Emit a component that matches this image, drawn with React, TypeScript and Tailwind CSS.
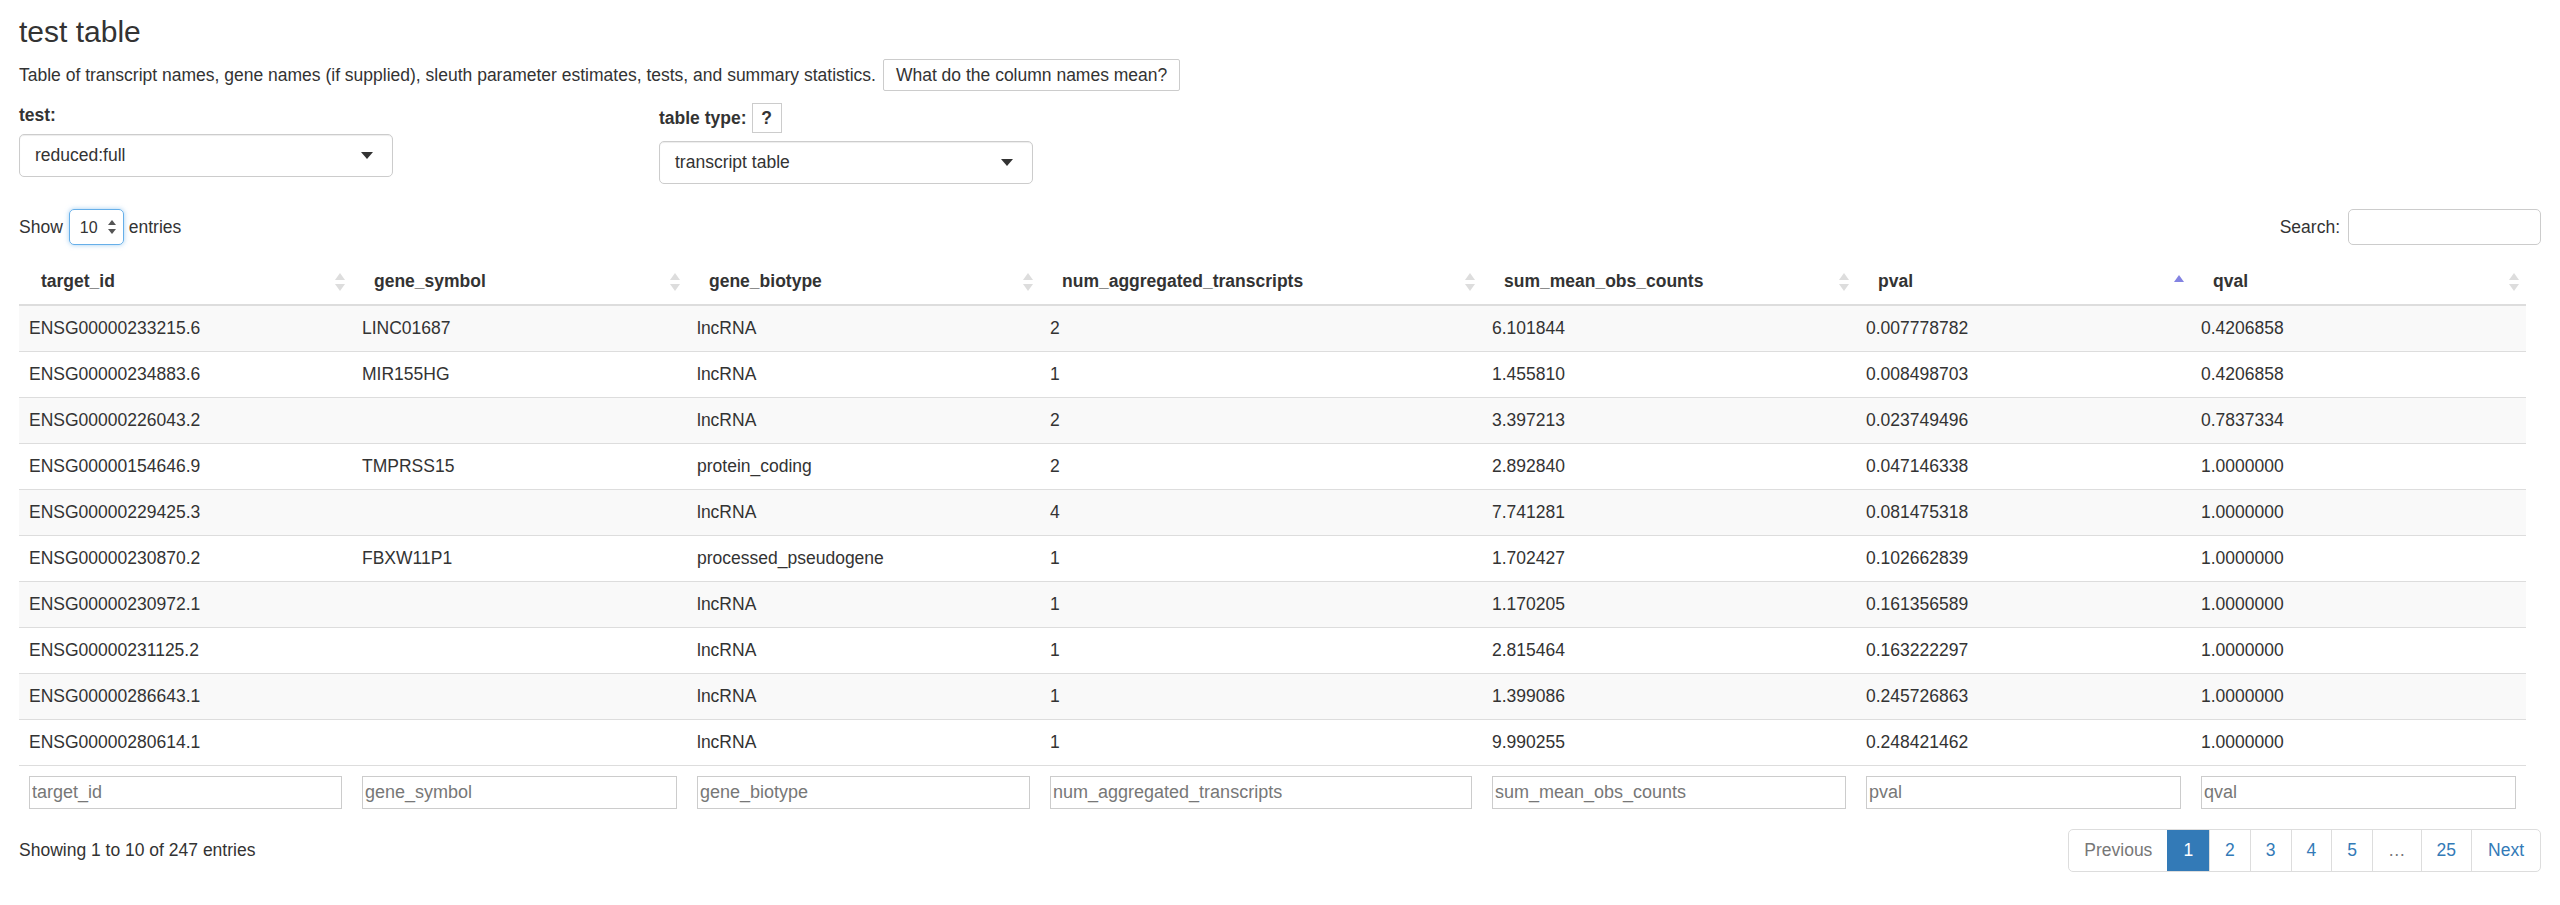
import React from "react";

const columns = [
  { name: "target_id", width: 333 },
  { name: "gene_symbol", width: 335 },
  { name: "gene_biotype", width: 353 },
  { name: "num_aggregated_transcripts", width: 442 },
  { name: "sum_mean_obs_counts", width: 374 },
  { name: "pval", width: 335 },
  { name: "qval", width: 335 },
];

const rows: string[][] = [
  ["ENSG00000233215.6", "LINC01687", "lncRNA", "2", "6.101844", "0.007778782", "0.4206858"],
  ["ENSG00000234883.6", "MIR155HG", "lncRNA", "1", "1.455810", "0.008498703", "0.4206858"],
  ["ENSG00000226043.2", "", "lncRNA", "2", "3.397213", "0.023749496", "0.7837334"],
  ["ENSG00000154646.9", "TMPRSS15", "protein_coding", "2", "2.892840", "0.047146338", "1.0000000"],
  ["ENSG00000229425.3", "", "lncRNA", "4", "7.741281", "0.081475318", "1.0000000"],
  ["ENSG00000230870.2", "FBXW11P1", "processed_pseudogene", "1", "1.702427", "0.102662839", "1.0000000"],
  ["ENSG00000230972.1", "", "lncRNA", "1", "1.170205", "0.161356589", "1.0000000"],
  ["ENSG00000231125.2", "", "lncRNA", "1", "2.815464", "0.163222297", "1.0000000"],
  ["ENSG00000286643.1", "", "lncRNA", "1", "1.399086", "0.245726863", "1.0000000"],
  ["ENSG00000280614.1", "", "lncRNA", "1", "9.990255", "0.248421462", "1.0000000"],
];

const pages = ["1", "2", "3", "4", "5", "…", "25"];

// gray double arrow, or the blue "asc" arrow on the sorted column
const SortIcon: React.FC<{ asc?: boolean }> = ({ asc }) => (
  <svg width="10" height="18" viewBox="0 0 10 18" className="shrink-0">
    {asc ? (
      <polygon points="5,2 10,9 0,9" fill="#8383e2" />
    ) : (
      <>
        <polygon points="5,0 10,7 0,7" fill="#dddddd" />
        <polygon points="0,11 10,11 5,18" fill="#dddddd" />
      </>
    )}
  </svg>
);

const Caret = () => (
  <svg width="12" height="7" viewBox="0 0 12 7">
    <polygon points="0,0 12,0 6,7" fill="#333333" />
  </svg>
);

const SelectBox: React.FC<{ value: string }> = ({ value }) => (
  <div className="w-[374px] h-[43px] border border-[#cccccc] rounded-[5px] bg-white flex items-center justify-between pl-[15px] pr-[19px] shadow-[inset_0_1px_1px_rgba(0,0,0,0.075)]">
    <span>{value}</span>
    <Caret />
  </div>
);

const App: React.FC = () => {
  return (
    <div className="px-[19px] pb-[20px] text-[17.5px] leading-[25px] text-[#333333] font-['Liberation_Sans',Arial,sans-serif]">
      <h3 className="pt-[15px] mb-[11px] text-[30px] leading-[33px] font-medium">test table</h3>

      <div className="flex items-center h-[32px]">
        <span>
          Table of transcript names, gene names (if supplied), sleuth parameter estimates, tests, and summary
          statistics.
        </span>
        <span className="ml-[7px] h-[32px] px-[12px] flex items-center border border-[#cccccc] rounded-[2px]">
          What do the column names mean?
        </span>
      </div>

      <div className="flex mt-[12px]">
        <div className="w-[640px]">
          <div className="h-[25px] mb-[6px] font-bold">test:</div>
          <SelectBox value="reduced:full" />
        </div>
        <div>
          <div className="flex items-center h-[30px] mb-[8px] font-bold">
            <span>table type:</span>
            <span className="ml-[5px] w-[30px] h-[30px] flex items-center justify-center border border-[#cccccc]">
              ?
            </span>
          </div>
          <SelectBox value="transcript table" />
        </div>
      </div>

      {/* datatable */}
      <div className="mt-[25px]">
        <div className="flex items-center justify-between h-[36px]">
          <div className="flex items-center">
            <span>Show</span>
            <div className="ml-[6px] mr-[5px] w-[55px] h-[36px] rounded-[5px] border border-[#66afe9] shadow-[0_0_5px_rgba(102,175,233,0.6)] flex items-center justify-between pl-[10px] pr-[7px]">
              <span className="text-[16px]">10</span>
              <svg width="8" height="14" viewBox="0 0 8 14">
                <polygon points="4,0 8,5 0,5" fill="#555555" />
                <polygon points="0,9 8,9 4,14" fill="#555555" />
              </svg>
            </div>
            <span>entries</span>
          </div>
          <div className="flex items-center">
            <span>Search:</span>
            <div className="ml-[8px] w-[193px] h-[36px] border border-[#cccccc] rounded-[5px]" />
          </div>
        </div>

        <table className="mt-[14px] w-[2507px] table-fixed border-collapse">
          <colgroup>
            {columns.map((c) => (
              <col key={c.name} style={{ width: c.width }} />
            ))}
          </colgroup>
          <thead>
            <tr className="border-b-2 border-[#dddddd]">
              {columns.map((c) => (
                <th key={c.name} className="pl-[22px] pr-[7px] py-[10px] text-left font-bold">
                  <div className="flex items-center justify-between">
                    <span>{c.name}</span>
                    <SortIcon asc={c.name === "pval"} />
                  </div>
                </th>
              ))}
            </tr>
          </thead>
          <tbody>
            {rows.map((r, idx) => (
              <tr key={idx} className={idx % 2 === 0 ? "bg-[#f9f9f9]" : "bg-white"}>
                {r.map((cell, j) => (
                  <td key={j} className="h-[46px] px-[10px] border-t border-[#dddddd] whitespace-nowrap">
                    {cell}
                  </td>
                ))}
              </tr>
            ))}
          </tbody>
          <tfoot>
            <tr>
              {columns.map((c) => (
                <td key={c.name} className="px-[10px] py-[10px] border-t border-[#dddddd]">
                  <input
                    className="block w-full h-[33px] border border-[#cccccc] pl-[2px] text-[18px] placeholder:text-[#777777] outline-none"
                    placeholder={c.name}
                  />
                </td>
              ))}
            </tr>
          </tfoot>
        </table>

        <div className="mt-[10px] flex items-center justify-between">
          <div>Showing 1 to 10 of 247 entries</div>
          <div className="flex h-[43px] border border-[#dddddd] rounded-[5px] overflow-hidden">
            <span className="px-[15px] flex items-center text-[#777777]">Previous</span>
            {pages.map((p) =>
              p === "1" ? (
                <span key={p} className="px-[16px] flex items-center bg-[#337ab7] text-white">
                  {p}
                </span>
              ) : (
                <span
                  key={p}
                  className={
                    "px-[15px] flex items-center border-l border-[#dddddd] " +
                    (p === "…" ? "text-[#777777]" : "text-[#337ab7]")
                  }
                >
                  {p}
                </span>
              )
            )}
            <span className="px-[16px] flex items-center border-l border-[#dddddd] text-[#337ab7]">Next</span>
          </div>
        </div>
      </div>
    </div>
  );
};

export default App;
